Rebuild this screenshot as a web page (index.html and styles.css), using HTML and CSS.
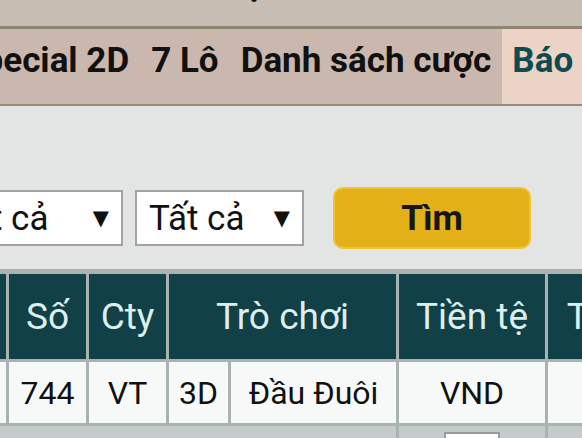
FILE: index.html
```html
<!DOCTYPE html>
<html>
<head>
	<title>Lịch sử cược</title>
	<link rel="stylesheet" href="styles.css">
</head>
<body>
	<div class="topbar">
		<h1 class="title">Lịch sử</h1>
	</div>

	<nav class="menu">
		<div class="menu-list">
			<a class="menu-item">Special 2D</a>
			<a class="menu-item">7 Lô</a>
			<a class="menu-item">Danh sách cược</a>
			<a class="menu-item active">Báo cáo</a>
		</div>
	</nav>

	<div class="content">
		<div class="filters">
			<div class="dropdown first">
				<span>Tất cả</span>
				<span class="arrow">▼</span>
			</div>
			<div class="dropdown">
				<span>Tất cả</span>
				<span class="arrow">▼</span>
			</div>
			<button class="search-btn" type="button">Tìm</button>
		</div>

		<table class="bets">
			<colgroup>
				<col class="c-stt">
				<col class="c-num">
				<col class="c-cty">
				<col class="c-type">
				<col class="c-game">
				<col class="c-cur">
				<col class="c-total">
			</colgroup>
			<thead>
				<tr>
					<th>#</th>
					<th>Số</th>
					<th>Cty</th>
					<th colspan="2">Trò chơi</th>
					<th>Tiền tệ</th>
					<th>Tổng</th>
				</tr>
			</thead>
			<tbody>
				<tr>
					<td>1</td>
					<td>744</td>
					<td>VT</td>
					<td>3D</td>
					<td>Đầu Đuôi</td>
					<td>VND</td>
					<td></td>
				</tr>
				<tr class="summary">
					<td colspan="5"></td>
					<td><div class="mini-box"></div></td>
					<td></td>
				</tr>
			</tbody>
		</table>
	</div>
</body>
</html>
```

FILE: styles.css
```css
body {
	margin: 0;
	font-family: Roboto, "Liberation Sans", sans-serif;
	background: #e3e5e4;
	overflow: hidden;
}

.topbar {
	height: 26px;
	overflow: hidden;
	background: #c8bdb3;
	border-bottom: 3px solid #8e8473;
}

.title {
	margin: -36px 0 0;
	padding-left: 231px;
	font-size: 34px;
	line-height: 40px;
	font-weight: bold;
	color: #111;
}

.menu {
	height: 75px;
	background: #cab8ae;
	border-bottom: 2px solid #978b7d;
	overflow: hidden;
}

.menu-list {
	display: flex;
	height: 100%;
	margin-left: -49px;
}

.menu-item {
	display: flex;
	align-items: center;
	padding: 0 11px 12px;
	font-size: 35px;
	font-weight: bold;
	color: #111;
	white-space: nowrap;
}

.menu-item.active {
	padding-left: 10px;
	background: #ebd3c6;
	color: #0e4a50;
}

.content {
	padding-top: 81px;
}

.filters {
	display: flex;
	align-items: center;
	gap: 12px;
	margin-left: -61px;
}

.dropdown {
	display: flex;
	align-items: center;
	justify-content: space-between;
	box-sizing: border-box;
	width: 169px;
	height: 56px;
	padding: 0 12px;
	background: #fff;
	border: 2px solid #a3a3a3;
	font-size: 35px;
	color: #111;
}

.dropdown.first {
	width: 184px;
}

.dropdown .arrow {
	font-family: "DejaVu Sans", sans-serif;
	font-size: 21px;
}

.search-btn {
	box-sizing: border-box;
	width: 198px;
	height: 62px;
	margin-left: 17px;
	background: #e3b017;
	border: 2px solid #f1c434;
	border-radius: 10px;
	font-family: Roboto, sans-serif;
	font-size: 35px;
	font-weight: bold;
	color: #161616;
}

.bets {
	table-layout: fixed;
	width: 728px;
	margin: 20px 0 0 -57px;
	border-collapse: separate;
	border-spacing: 3px;
	border-top: 2px solid #a9b3b2;
	background: #a9b3b2;
}

.c-stt { width: 60px; }
.c-num { width: 77px; }
.c-cty { width: 77px; }
.c-type { width: 59px; }
.c-game { width: 165px; }
.c-cur { width: 146px; }
.c-total { width: 120px; }

.bets th,
.bets td {
	padding: 0;
	text-align: center;
	white-space: nowrap;
}

.bets th {
	height: 85px;
	background: #124047;
	color: #dcefee;
	font-size: 37px;
	font-weight: normal;
}

.bets td {
	height: 61px;
	background: #f7f9f8;
	color: #111;
	font-size: 32px;
}

.bets .summary td {
	height: 60px;
	background: #c4cbca;
	vertical-align: top;
}

.mini-box {
	width: 56px;
	height: 40px;
	margin: 6px auto 0;
	box-sizing: border-box;
	background: #fff;
	border: 2px solid #9a9a9a;
}
```
